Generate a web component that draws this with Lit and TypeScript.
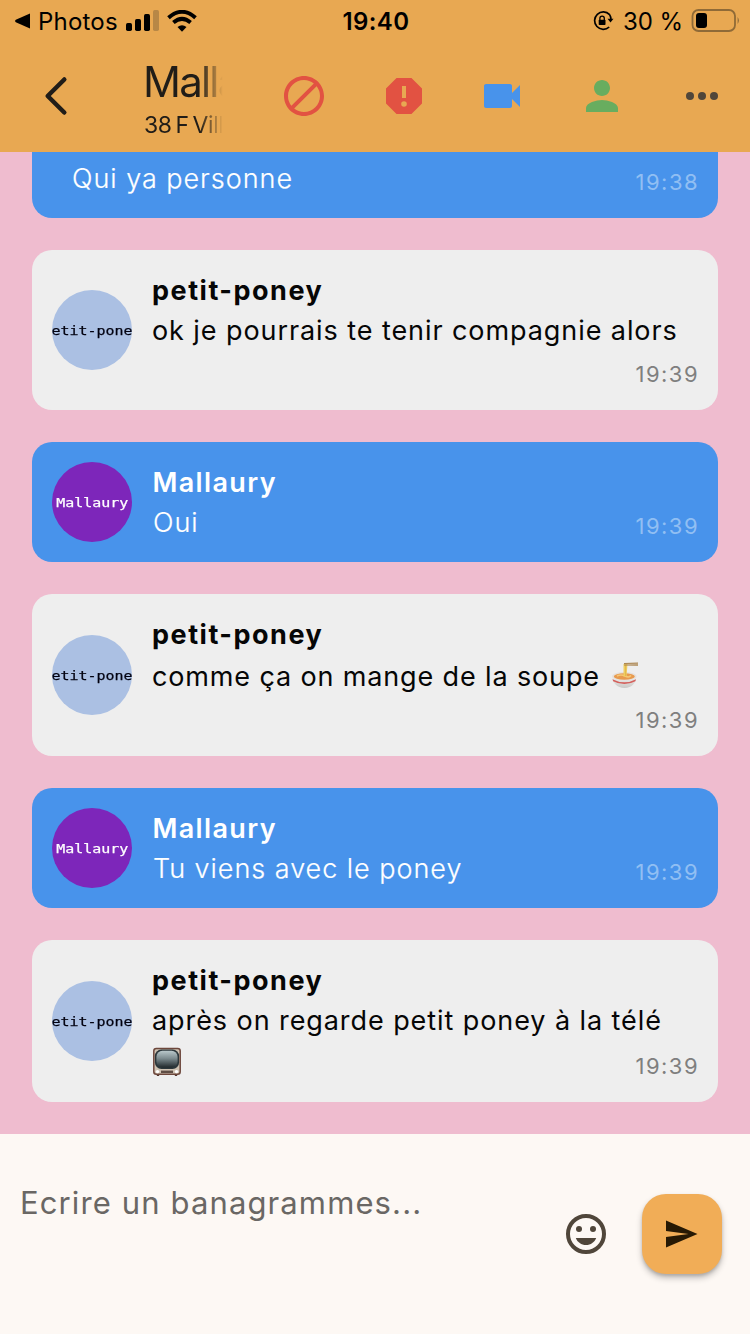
import { LitElement, html, css, svg, nothing } from "lit";
import { customElement, property } from "lit/decorators.js";
import { classMap } from "lit/directives/class-map.js";

interface Message {
  author?: string;
  mine: boolean;
  text: string;
  emoji?: "soup" | "tv";
  time: string;
}

const MESSAGES: Message[] = [
  { mine: true, text: "Qui ya personne", time: "19:38" },
  { author: "petit-poney", mine: false, text: "ok je pourrais te tenir compagnie alors", time: "19:39" },
  { author: "Mallaury", mine: true, text: "Oui", time: "19:39" },
  { author: "petit-poney", mine: false, text: "comme ça on mange de la soupe", emoji: "soup", time: "19:39" },
  { author: "Mallaury", mine: true, text: "Tu viens avec le poney", time: "19:39" },
  { author: "petit-poney", mine: false, text: "après on regarde petit poney à la télé", emoji: "tv", time: "19:39" },
];

const soup = html`<svg class="emoji soup" width="28" height="28" viewBox="0 0 28 28" aria-label="soupe">
  <defs><linearGradient id="bowl" x1="0" x2="0" y1="0" y2="1"><stop offset="0" stop-color="#f1efed" /><stop offset="1" stop-color="#c9c8c6" /></linearGradient></defs>
  <path d="M1 14.500C1.300 20.500 6 26 13.500 26S25.200 20.500 25.500 14.500Z" fill="url(#bowl)" />
  <path d="M1.500 17.200Q13.500 23.500 25 17.200L24.400 19.200Q13.500 25 2.100 19.200Z" fill="#d4605c" />
  <ellipse cx="13.300" cy="14.300" rx="12.300" ry="4.300" fill="#e6e1dc" />
  <ellipse cx="13.300" cy="14.500" rx="10.500" ry="3.300" fill="#e89a4e" />
  <path d="M6 14q4-2 8 0t6-.5" stroke="#f4c878" stroke-width="1.500" fill="none" />
  <path d="M12.500 2h4l-1 12.500h-3z" fill="#efce61" />
  <path d="M14.600 3v11" stroke="#d9a93b" stroke-width=".6" />
  <path d="M13 1l14-.5v1.200L13 2zM13 2.600l14-.3v1.400l-14-.2z" fill="#ab8550" />
</svg>`;

const tv = html`<svg class="emoji" width="28" height="30" viewBox="0 0 28 30" aria-label="télé">
  <defs><linearGradient id="screen" x1="0" x2="0" y1="0" y2="1"><stop offset="0" stop-color="#b9c8cb" /><stop offset=".45" stop-color="#7d8c90" /><stop offset="1" stop-color="#20282b" /></linearGradient></defs>
  <path d="M3 26h4l-1 3H4zM21 26h4l-1 3h-2z" fill="#54372f" />
  <rect x=".8" y="1.500" width="26.400" height="25.800" rx="2.500" fill="#cfc2b2" stroke="#6d473c" stroke-width="1.500" />
  <rect x="1.900" y="2.600" width="24.200" height="19.400" rx="6.500" fill="#2c373b" />
  <rect x="3.400" y="3.800" width="21.200" height="16.800" rx="6" fill="url(#screen)" />
  <circle cx="4.500" cy="24.600" r="1.700" fill="#fff" /><circle cx="23.500" cy="24.600" r="1.700" fill="#fff" />
  <rect x="8" y="23.600" width="12" height="2.400" fill="#5e4d44" />
</svg>`;

@customElement("chat-message")
class ChatMessage extends LitElement {
  static styles = css`
    :host { display: block; flex: none; }
    .card {
      display: flex; align-items: center; gap: 20px; padding: 20px;
      border-radius: 20px; background: #eee; color: #060606;
      font-family: Inter, "Liberation Sans", sans-serif;
    }
    .mine { background: #4893eb; color: #fff; }
    .headless { padding-left: 40px; padding-top: 60px; }
    .avatar {
      box-sizing: border-box; width: 80px; height: 80px; padding-top: 2px;
      flex: none; border-radius: 50%; overflow: hidden;
      display: flex; align-items: center; justify-content: center;
      background: #abc0e3; color: #000010;
      font: 13px/20px "DejaVu Sans Mono", monospace;
      -webkit-text-stroke: 0.25px currentColor;
    }
    .mine .avatar { background: #7d26ba; color: #fff; }
    .initials { flex: none; transform: scaleX(1.15); }
    .body { flex: 1; min-width: 0; display: flex; flex-direction: column; }
    .name { font-size: 27px; font-weight: 700; height: 40px; line-height: 42px; letter-spacing: 1.52px; }
    .mine .name { font-weight: 600; letter-spacing: 1.35px; padding-left: 0.5px; }
    .text { font-size: 27px; height: 40px; line-height: 42px; letter-spacing: 0.92px; white-space: nowrap; }
    .mine .text { font-weight: 300; letter-spacing: 0.97px; padding-left: 1px; -webkit-text-stroke: 0.2px currentColor; }
    .headless .text { padding-left: 0; }
    .with-soup { height: 42px; line-height: 45px; letter-spacing: 0.86px; }
    .tv-line { display: flex; align-items: center; box-sizing: border-box; height: 42px; padding: 2px 0 0 1px; }
    .emoji { display: inline-block; }
    .soup { vertical-align: -4px; margin-left: 3px; }
    .time {
      align-self: flex-end; font-size: 22px; line-height: 32px; height: 32px;
      letter-spacing: 1.45px; margin-right: -1px; color: #7f7f7f; margin-top: 8px;
    }
    .mine .time { color: #91bff3; }
    .beside { margin-top: -32px; }
  `;
  @property({ attribute: false }) message!: Message;

  render() {
    const m = this.message;
    const isTv = m.emoji === "tv";
    return html`<div class=${classMap({ card: true, mine: m.mine, headless: !m.author })}>
      ${m.author ? html`<div class="avatar"><span class="initials">${m.author}</span></div>` : nothing}
      <div class="body">
        ${m.author ? html`<div class="name">${m.author}</div>` : nothing}
        <div class=${classMap({ text: true, "with-soup": m.emoji === "soup" })}>${m.text}${m.emoji === "soup" ? html` ${soup}` : nothing}</div>
        ${isTv ? html`<div class="tv-line">${tv}</div>` : nothing}
        <div class=${classMap({ time: true, beside: m.mine || isTv })}>${m.time}</div>
      </div>
    </div>`;
  }
}

const icon = (color: string, shape: unknown) =>
  html`<svg width="48" height="48" viewBox="0 0 24 24" fill=${color}>${shape}</svg>`;

@customElement("app-root")
class AppRoot extends LitElement {
  static styles = css`
    :host {
      display: flex; flex-direction: column; width: 750px; height: 1334px; overflow: hidden;
      font-family: Inter, "Liberation Sans", sans-serif; background: #efbccf;
    }
    svg { display: block; flex: none; }
    .top { flex: none; height: 152px; background: #e8a852; color: #000; }
    .status {
      height: 41px; display: grid; grid-template-columns: 1fr auto 1fr; align-items: center;
      font-size: 24px; line-height: 41px; padding: 0 10px 0 14px;
    }
    .left, .right { display: flex; align-items: center; }
    .right { justify-content: flex-end; }
    .photos { margin-left: 8px; letter-spacing: 0.2px; }
    .signal { margin-left: 8px; }
    .wifi { margin-left: 8px; }
    .clock { font-weight: 600; letter-spacing: 0.39px; margin: 0 1px 0 -1px; }
    .percent { margin: 1px 8px 0 9px; letter-spacing: -0.1px; }
    .bar { height: 111px; box-sizing: border-box; display: flex; align-items: center; padding: 0 24px 2px 40px; }
    .title {
      width: 82px; margin-left: 72px; padding-top: 8px; overflow: hidden; white-space: nowrap; color: #211d18;
      mask-image: linear-gradient(90deg, #000 68%, transparent 96%);
      -webkit-mask-image: linear-gradient(90deg, #000 68%, transparent 96%);
    }
    .who { font-size: 42px; line-height: 50px; letter-spacing: -1.800px; margin-left: -1px; }
    .where { font-size: 23px; line-height: 36px; letter-spacing: -0.4px; word-spacing: -2.2px; }
    .actions { margin-left: auto; display: flex; gap: 52px; align-items: center; }
    .video { margin-left: -2px; }
    .list {
      flex: 1; min-height: 0; overflow: hidden; padding: 0 32px 32px;
      display: flex; flex-direction: column; justify-content: flex-end; gap: 32px;
    }
    .composer {
      flex: none; box-sizing: border-box; height: 200px; background: #fdf8f4; color: #6a6764;
      display: flex; padding: 49px 28px 60px 20px;
    }
    .field { flex: 1; font-size: 31px; line-height: 40px; letter-spacing: 1.12px; }
    .tools { display: flex; align-items: center; align-self: flex-end; gap: 32px; }
    .send {
      box-sizing: border-box; width: 80px; height: 80px; padding: 0 2px 0 0;
      border-radius: 24px; background: #f1ad57;
      display: flex; align-items: center; justify-content: center;
      box-shadow: 0 4px 6px rgba(0, 0, 0, 0.24), 0 2px 3px rgba(0, 0, 0, 0.12);
    }
  `;

  render() {
    return html`
      <header class="top">
        <div class="status">
          <div class="left">
            <svg width="16" height="16" viewBox="0 0 16 16"><path d="M16 .6v14.800L1.800 9.200Q0 8 1.800 6.800Z" /></svg>
            <span class="photos">Photos</span>
            <svg class="signal" width="33" height="22" viewBox="0 0 33 22">
              <rect y="13" width="6" height="8" rx="1.700" /><rect x="9" y="9" width="6" height="12" rx="1.700" />
              <rect x="18" y="4" width="6" height="17" rx="1.700" /><rect x="27" width="6" height="21" rx="1.700" fill="#b78746" />
            </svg>
            <svg class="wifi" width="30" height="22" viewBox="0 0 30 22">
              <path d="M1.500 7.800Q15-4.200 28.500 7.800M6.400 12.600Q15 5.200 23.600 12.600" fill="none" stroke="#000" stroke-width="3.900" />
              <path d="M10.500 17Q15 13.300 19.500 17L15 21.700Z" />
            </svg>
          </div>
          <div class="clock">19:40</div>
          <div class="right">
            <svg width="22" height="22" viewBox="0 0 22 22">
              <path d="M17.600 4.600A8.700 8.700 0 1 0 17.200 17M17.600 4.600A8.700 8.700 0 0 1 18.900 9" fill="none" stroke="#000" stroke-width="1.700" />
              <path d="M15.500 8.800h6l-3 3.700z" />
              <rect x="6.700" y="9.800" width="6.800" height="5.200" rx=".7" />
              <path d="M7.900 10V8.300a2.200 2.200 0 0 1 4.400 0V10" fill="none" stroke="#000" stroke-width="1.300" />
            </svg>
            <span class="percent">30 %</span>
            <svg width="49" height="24" viewBox="0 0 49 24">
              <rect x="1.500" y="1" width="42.500" height="21" rx="6" fill="none" stroke="#8f6a37" stroke-width="1.800" />
              <rect x="5" y="4" width="11" height="15" rx="3" />
              <path d="M46.600 8q2.600 3.500 0 7z" fill="#8f6a37" />
            </svg>
          </div>
        </div>
        <div class="bar">
          <svg width="32" height="48" viewBox="0 0 32 48"><path d="M24.300 7.500L7.700 24l16.600 16.500" fill="none" stroke="#211d18" stroke-width="4.500" stroke-linecap="round" stroke-linejoin="round" /></svg>
          <div class="title"><div class="who">Mallaury</div><div class="where">38 F Villeneuve</div></div>
          <div class="actions">
            ${icon("#e25242", svg`<path d="M12 2C6.480 2 2 6.480 2 12s4.480 10 10 10 10-4.480 10-10S17.520 2 12 2zM4 12c0-4.420 3.580-8 8-8 1.850 0 3.550.63 4.900 1.690L5.690 16.900A7.900 7.900 0 0 1 4 12zm8 8c-1.850 0-3.550-.63-4.900-1.690L18.310 7.100A7.900 7.900 0 0 1 20 12c0 4.420-3.580 8-8 8z" />`)}
            ${icon("#e25242", svg`<path fill-rule="evenodd" d="M15.730 3H8.270L3 8.270v7.460L8.270 21h7.460L21 15.730V8.270zM13 13h-2V7h2zM12 14.600a1.400 1.400 0 1 1 0 2.800 1.400 1.400 0 0 1 0-2.800z" />`)}
            <div class="video">${icon("#4893eb", svg`<path d="M17 10.500V7c0-.55-.45-1-1-1H4c-.55 0-1 .45-1 1v10c0 .55.45 1 1 1h12c.55 0 1-.45 1-1v-3.500l4 4v-11z" />`)}</div>
            ${icon("#68ad5f", svg`<path d="M12 12c2.210 0 4-1.790 4-4s-1.790-4-4-4-4 1.790-4 4 1.790 4 4 4zm0 2c-2.670 0-8 1.340-8 4v2h16v-2c0-2.660-5.330-4-8-4z" />`)}
            ${icon("#50463a", svg`<circle cx="6" cy="12" r="2" /><circle cx="12" cy="12" r="2" /><circle cx="18" cy="12" r="2" />`)}
          </div>
        </div>
      </header>
      <main class="list">${MESSAGES.map((m) => html`<chat-message .message=${m}></chat-message>`)}</main>
      <footer class="composer">
        <div class="field">Ecrire un banagrammes...</div>
        <div class="tools">
          <svg width="48" height="48" viewBox="0 0 48 48" fill="#50463a">
            <circle cx="24" cy="24" r="18" fill="none" stroke="#50463a" stroke-width="4" />
            <circle cx="17" cy="19" r="3" /><circle cx="31" cy="19" r="3" />
            <path d="M13.800 28h20.400c-1.600 4.300-5.500 7-10.200 7s-8.600-2.700-10.200-7z" />
          </svg>
          <div class="send"><svg width="36" height="36" viewBox="0 0 24 24" fill="#271904"><path d="M2 21l21-9L2 3v7l15 2-15 2z" /></svg></div>
        </div>
      </footer>`;
  }
}
